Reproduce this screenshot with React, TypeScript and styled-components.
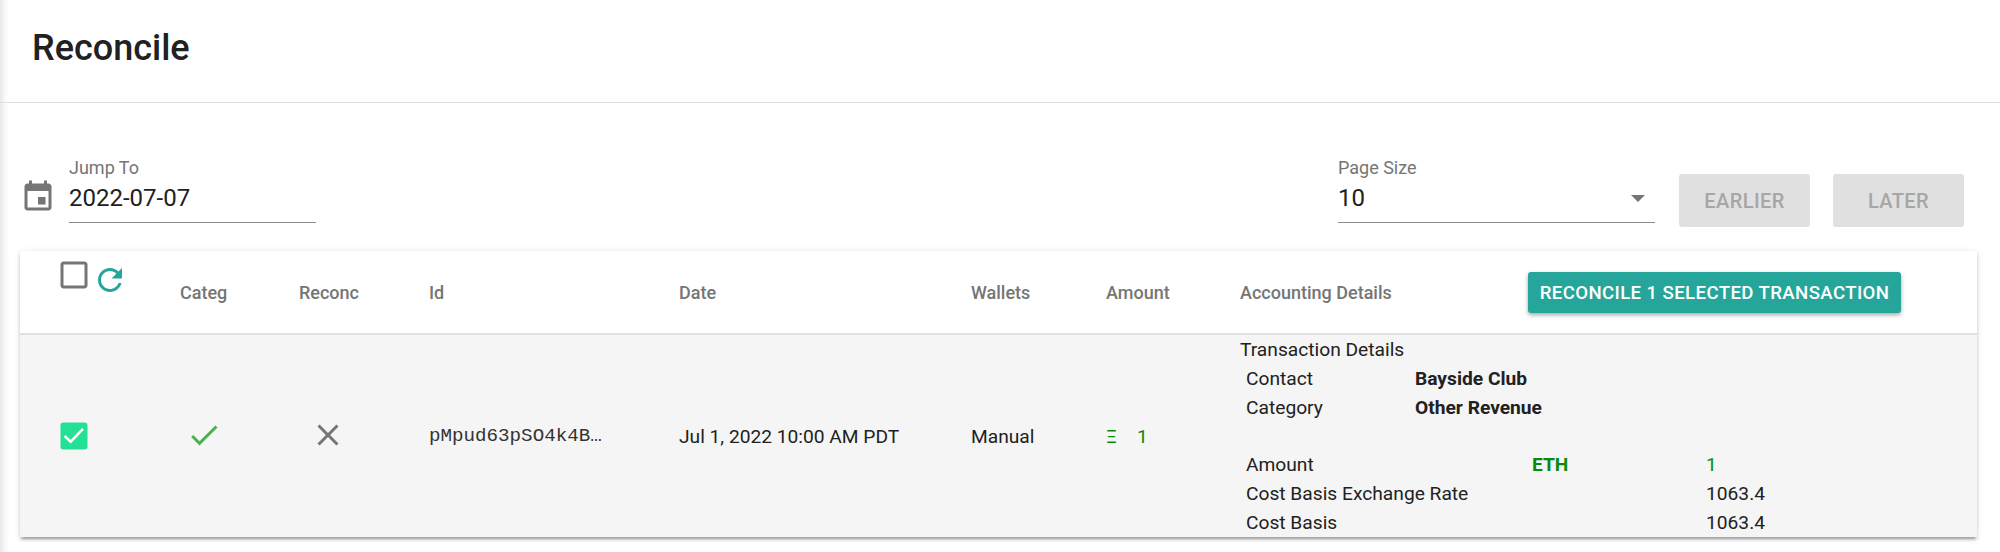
import React from "react";
import styled, { createGlobalStyle } from "styled-components";

const Global = createGlobalStyle`
  html, body { margin: 0; padding: 0; background: #fff; }
  body { font-family: Roboto, "Liberation Sans", sans-serif; color: #212121; }
`;

const Page = styled.div`
  width: 2000px;
  height: 552px;
  overflow: hidden;
  box-sizing: border-box;
  box-shadow: inset 9px 0 8px -8px rgba(0, 0, 0, 0.16);
`;

const TitleBar = styled.header`
  height: 103px;
  box-sizing: border-box;
  border-bottom: 1px solid #dfdfe6;
  padding: 25px 0 0 32px;
`;

const Title = styled.h1`
  margin: 0;
  font-size: 36px;
  line-height: 46px;
  font-weight: 500;
  color: #212121;
`;

const Toolbar = styled.div`
  display: flex;
  align-items: flex-start;
  height: 148px;
  box-sizing: border-box;
  padding: 53px 36px 0 20px;
`;

const CalendarSlot = styled.div`
  width: 49px;
  height: 36px;
  margin-top: 23px;
  color: #757575;
  svg { display: block; }
`;

const Field = styled.div<{ $w: number }>`
  width: ${(p) => p.$w}px;
  height: 67px;
  box-sizing: border-box;
  border-bottom: 1px solid #8c8c8c;
  position: relative;
`;

const FieldLabel = styled.div`
  font-size: 18px;
  line-height: 22px;
  height: 23px;
  margin-top: 1px;
  color: #757575;
`;

const FieldValue = styled.div`
  font-size: 24px;
  line-height: 30px;
  margin-top: 3px;
  color: #212121;
`;

const Caret = styled.div`
  position: absolute;
  right: 10px;
  top: 39px;
  width: 0;
  height: 0;
  border-left: 7px solid transparent;
  border-right: 7px solid transparent;
  border-top: 7px solid #757575;
`;

const Spacer = styled.div`
  flex: 1;
`;

const FlatButton = styled.div<{ $gap: number }>`
  width: 131px;
  height: 53px;
  margin: 18px 0 0 ${(p) => p.$gap}px;
  background: #e0e0e0;
  color: #a6a6a6;
  border-radius: 3px;
  font-size: 20px;
  font-weight: 500;
  letter-spacing: 0.4px;
  display: flex;
  align-items: center;
  justify-content: center;
`;

const Table = styled.section`
  width: 1957px;
  height: 286px;
  margin-left: 20px;
  background: #fff;
  box-shadow: 0 4px 2px -2px rgba(0, 0, 0, 0.2), 0 3px 3px rgba(0, 0, 0, 0.14), 0 1px 6px rgba(0, 0, 0, 0.12);
`;

const columns = "160px 119px 130px 250px 292px 135px 134px 1fr";

const HeadRow = styled.div`
  display: grid;
  grid-template-columns: ${columns};
  height: 84px;
  box-sizing: border-box;
  border-bottom: 2px solid #e0e0e0;
  align-items: center;
`;

const HeadIcons = styled.div`
  display: flex;
  align-items: flex-start;
  align-self: start;
  padding: 6px 0 0 36px;
  svg { display: block; flex: none; }
`;

const RefreshSlot = styled.div`
  margin-top: 5px;
  color: #26a69a;
`;

const GreyIcon = styled.div`
  color: #757575;
`;

const HeadCell = styled.div`
  font-size: 18px;
  font-weight: 500;
  color: #757575;
  line-height: 22px;
  padding-top: 1px;
`;

const DetailsHead = styled.div`
  display: flex;
  align-items: center;
`;

const DetailsLabel = styled(HeadCell)`
  width: 288px;
`;

const ReconcileButton = styled.div`
  width: 373px;
  height: 41px;
  margin-top: 1px;
  background: #26a69a;
  color: #fff;
  border-radius: 3px;
  font-size: 18.6px;
  font-weight: 500;
  letter-spacing: 0.4px;
  display: flex;
  align-items: center;
  justify-content: center;
  box-shadow: 0 2px 4px rgba(0, 0, 0, 0.35);
`;

const BodyRow = styled.div`
  display: grid;
  grid-template-columns: ${columns};
  height: 202px;
  background: #f5f5f5;
  align-items: center;
  font-size: 19.2px;
  color: #212121;
`;

const IconCell = styled.div<{ $shift: number; $lift: number; $color: string }>`
  margin-left: ${(p) => p.$shift}px;
  padding-bottom: ${(p) => p.$lift}px;
  color: ${(p) => p.$color};
  svg { display: block; }
`;

const IdCell = styled.div`
  font-family: "Liberation Mono", monospace;
  font-size: 19.2px;
  white-space: nowrap;
  color: #333;
`;

const AmountCell = styled.div`
  display: flex;
  align-items: center;
  color: #0a8a0a;
`;

const EthGlyph = styled.span`
  width: 31px;
`;

const Details = styled.div`
  align-self: start;
  display: grid;
  grid-template-columns: 169px 117px 174px 1fr;
  grid-auto-rows: 28.8px;
  padding: 1px 0 0 6px;
  line-height: 28.8px;
`;

const DetailsTitle = styled.div`
  grid-column: 1 / -1;
  margin-left: -6px;
`;

const Bold = styled.div`
  grid-column: 2 / -1;
  font-weight: 700;
`;

const Gap = styled.div`
  grid-column: 1 / -1;
`;

const Wide = styled.div`
  grid-column: 1 / 4;
`;

const EthCode = styled.div`
  grid-column: 2 / 4;
  padding-left: 117px;
  font-weight: 700;
  color: #0a8a0a;
`;

const Positive = styled.div`
  color: #0a8a0a;
`;

const Icon = ({ d }: { d: string }) => (
  <svg width="36" height="36" viewBox="0 0 24 24" fill="currentColor">
    <path d={d} />
  </svg>
);

const CheckedBox = () => (
  <svg width="36" height="36" viewBox="0 0 24 24">
    <rect x="3" y="3" width="18" height="18" rx="2" fill="#22e094" />
    <path d="M5.7 12 9.8 15.8 18 7.2" fill="none" stroke="#fff" strokeWidth="1.7" />
  </svg>
);

const EVENT = "M17 12h-5v5h5v-5zM16 1v2H8V1H6v2H5c-1.11 0-1.99.9-1.99 2L3 19c0 1.1.89 2 2 2h14c1.1 0 2-.9 2-2V5c0-1.1-.9-2-2-2h-1V1h-2zm3 18H5V8h14v11z";
const BLANK = "M19 5v14H5V5h14m0-2H5c-1.1 0-2 .9-2 2v14c0 1.1.9 2 2 2h14c1.1 0 2-.9 2-2V5c0-1.1-.9-2-2-2z";
const REFRESH = "M17.65 6.35C16.2 4.9 14.21 4 12 4c-4.42 0-7.99 3.58-7.99 8s3.57 8 7.99 8c3.73 0 6.84-2.55 7.73-6h-2.08c-.82 2.33-3.04 4-5.65 4-3.31 0-6-2.69-6-6s2.69-6 6-6c1.66 0 3.14.69 4.22 1.78L13 11h7V4l-2.35 2.35z";
const CHECK = "M9 16.17L4.83 12l-1.42 1.41L9 19 21 7l-1.41-1.41z";
const CLEAR = "M19 6.41L17.59 5 12 10.59 6.41 5 5 6.41 10.59 12 5 17.59 6.41 19 12 13.41 17.59 19 19 17.59 13.41 12z";

export default function App() {
  return (
    <Page>
      <Global />
      <TitleBar>
        <Title>Reconcile</Title>
      </TitleBar>
      <Toolbar>
        <CalendarSlot>
          <Icon d={EVENT} />
        </CalendarSlot>
        <Field $w={247}>
          <FieldLabel>Jump To</FieldLabel>
          <FieldValue>2022-07-07</FieldValue>
        </Field>
        <Spacer />
        <Field $w={317}>
          <FieldLabel>Page Size</FieldLabel>
          <FieldValue>10</FieldValue>
          <Caret />
        </Field>
        <FlatButton $gap={24}>EARLIER</FlatButton>
        <FlatButton $gap={23}>LATER</FlatButton>
      </Toolbar>
      <Table>
        <HeadRow>
          <HeadIcons>
            <GreyIcon>
              <Icon d={BLANK} />
            </GreyIcon>
            <RefreshSlot>
              <Icon d={REFRESH} />
            </RefreshSlot>
          </HeadIcons>
          <HeadCell>Categ</HeadCell>
          <HeadCell>Reconc</HeadCell>
          <HeadCell>Id</HeadCell>
          <HeadCell>Date</HeadCell>
          <HeadCell>Wallets</HeadCell>
          <HeadCell>Amount</HeadCell>
          <DetailsHead>
            <DetailsLabel>Accounting Details</DetailsLabel>
            <ReconcileButton>RECONCILE 1 SELECTED TRANSACTION</ReconcileButton>
          </DetailsHead>
        </HeadRow>
        <BodyRow>
          <IconCell $shift={36} $lift={0} $color="#22e094">
            <CheckedBox />
          </IconCell>
          <IconCell $shift={6} $lift={3} $color="#4caf50">
            <Icon d={CHECK} />
          </IconCell>
          <IconCell $shift={11} $lift={3} $color="#757575">
            <Icon d={CLEAR} />
          </IconCell>
          <IdCell>pMpud63pSO4k4B…</IdCell>
          <div>Jul 1, 2022 10:00 AM PDT</div>
          <div>Manual</div>
          <AmountCell>
            <EthGlyph>Ξ</EthGlyph>
            <span>1</span>
          </AmountCell>
          <Details>
            <DetailsTitle>Transaction Details</DetailsTitle>
            <div>Contact</div>
            <Bold>Bayside Club</Bold>
            <div>Category</div>
            <Bold>Other Revenue</Bold>
            <Gap />
            <div>Amount</div>
            <EthCode>ETH</EthCode>
            <Positive>1</Positive>
            <Wide>Cost Basis Exchange Rate</Wide>
            <div>1063.4</div>
            <Wide>Cost Basis</Wide>
            <div>1063.4</div>
          </Details>
        </BodyRow>
      </Table>
    </Page>
  );
}
